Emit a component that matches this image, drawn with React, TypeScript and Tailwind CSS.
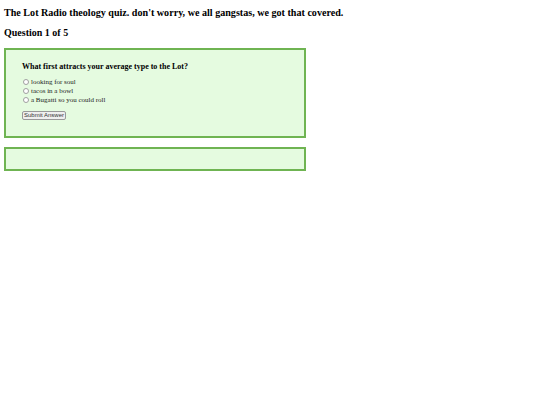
export default function App() {
  const options = ["looking for soul", "tacos in a bowl", "a Bugatti so you could roll"];
  return (
    <div className="min-h-screen bg-white text-black px-[4px] pt-[7px]" style={{ fontFamily: '"Liberation Serif", serif' }}>
      <h2 className="text-[10.1px] font-bold leading-[12px]">
        The Lot Radio theology quiz. don't worry, we all gangstas, we got that covered.
      </h2>
      <h3 className="text-[10px] font-bold leading-[12px] mt-[8px]">Question 1 of 5</h3>
      <div className="mt-[9px] w-[302px] h-[90px] border-2 border-[#6fb452] bg-[#e5fbe0] pl-[16px] pt-[12px]">
        <p className="text-[8px] font-bold leading-[10px]">What first attracts your average type to the Lot?</p>
        <div className="mt-[5px] flex flex-col">
          {options.map((o) => (
            <label key={o} className="flex items-center h-[9px] text-[7px] leading-[8px] text-[#222]">
              <span className="ml-[1px] mr-[2px] w-[6px] h-[6px] rounded-full border border-[#a0a0a0] bg-white" />
              {o}
            </label>
          ))}
        </div>
        <button
          className="block mt-[7px] h-[9px] w-[44px] border border-[#999] rounded-[2px] bg-[#efefef] text-[6px] leading-[7px] text-[#333]"
          style={{ fontFamily: '"Liberation Sans", sans-serif' }}
        >
          Submit Answer
        </button>
      </div>
      <div className="mt-[9px] w-[302px] h-[24px] border-2 border-[#6fb452] bg-[#e5fbe0]" />
    </div>
  );
}
